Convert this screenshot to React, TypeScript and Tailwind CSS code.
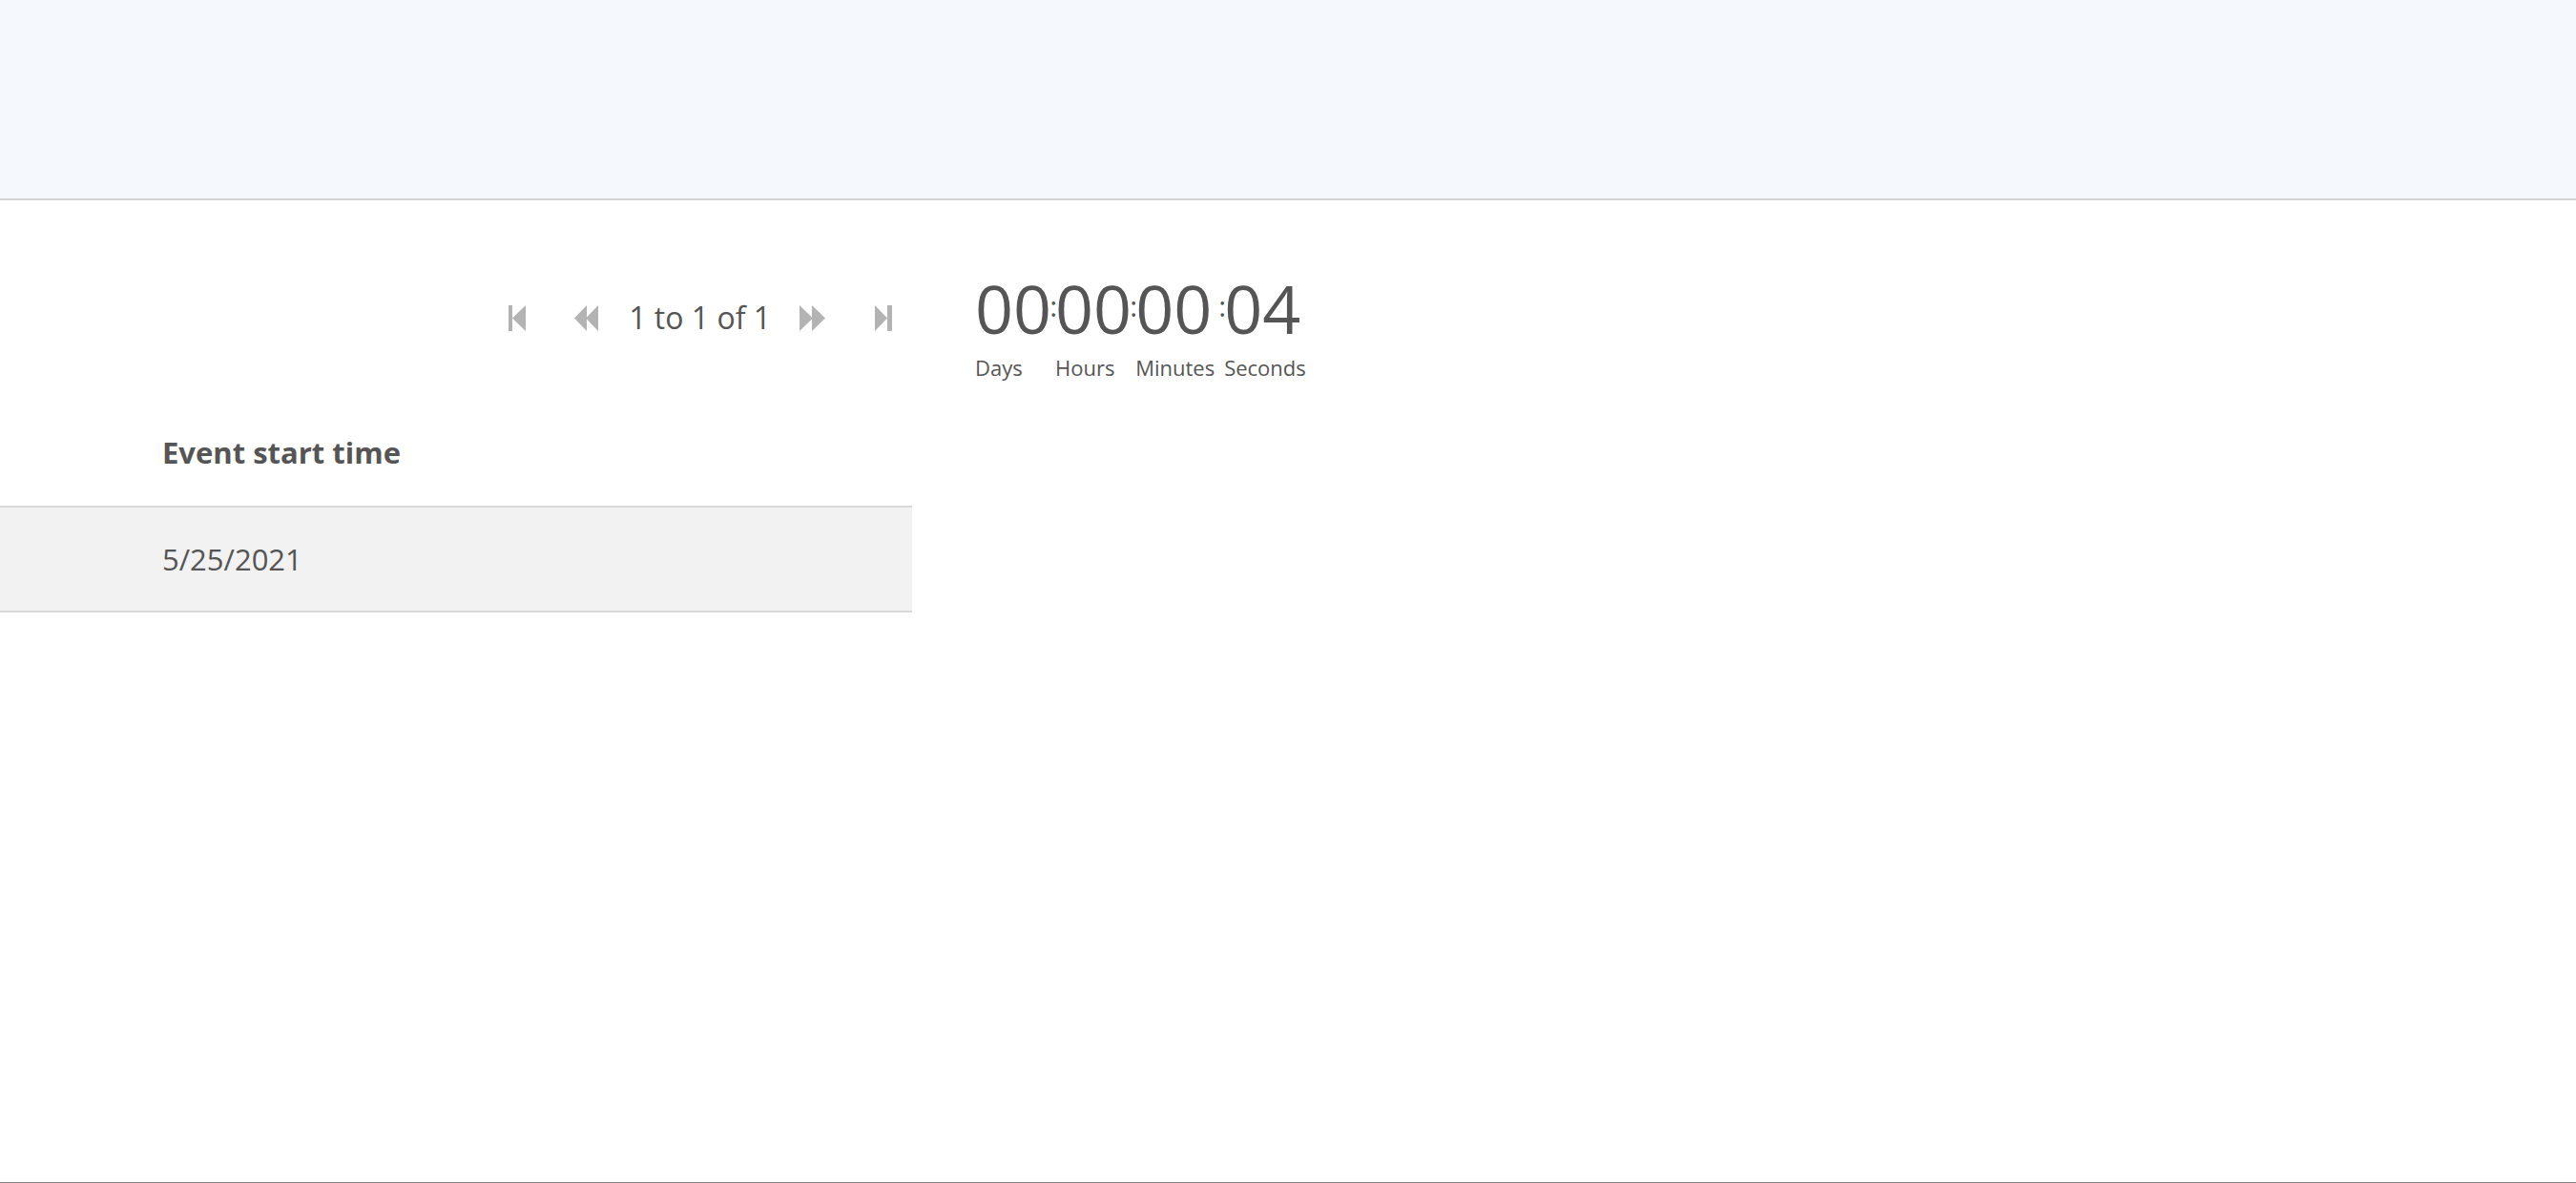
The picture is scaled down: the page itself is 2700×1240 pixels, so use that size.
import React from "react";

const ICON = "#b3b3b3";

function FirstIcon() {
  return (
    <svg width="18" height="27" viewBox="0 0 18 27">
      <rect x="0" y="0" width="4" height="27" fill={ICON} />
      <polygon points="18,0 18,27 4,13.5" fill={ICON} />
    </svg>
  );
}
function PrevIcon() {
  return (
    <svg width="25" height="27" viewBox="0 0 25 27">
      <polygon points="13,0 13,27 0,13.5" fill={ICON} />
      <polygon points="25,0 25,27 12,13.5" fill={ICON} />
    </svg>
  );
}
function NextIcon() {
  return (
    <svg width="27" height="27" viewBox="0 0 27 27">
      <polygon points="0,0 0,27 14,13.5" fill={ICON} />
      <polygon points="13,0 13,27 27,13.5" fill={ICON} />
    </svg>
  );
}
function LastIcon() {
  return (
    <svg width="18" height="27" viewBox="0 0 18 27">
      <polygon points="0,0 0,27 13,13.5" fill={ICON} />
      <rect x="13" y="0" width="5" height="27" fill={ICON} />
    </svg>
  );
}

function Unit({ value, label }: { value: string; label: string }) {
  return (
    <div className="flex flex-col items-start">
      <div className="text-[70px] leading-none">{value}</div>
      <div className="mt-[16px] pr-[6px] text-[22px] leading-none">{label}</div>
    </div>
  );
}

function Colon() {
  return (
    <div className="w-[4px] flex justify-center h-[70px] items-center">
      <span className="text-[30px] leading-none -mt-[4px]">:</span>
    </div>
  );
}

export default function App() {
  return (
    <div
      className="h-[1240px] w-full flex flex-col border-b border-[#808080] bg-white text-[#555555]"
      style={{ fontFamily: "'Open Sans', 'Noto Sans', sans-serif" }}
    >
      <header className="h-[210px] shrink-0 bg-[#f5f8fc] border-b-2 border-[#d3d3d3]" />
      <main className="flex flex-1">
        <div className="w-[956px] shrink-0 flex flex-col">
          <div className="mt-[101px] h-[44px] flex items-center justify-end pr-[21px]">
            <FirstIcon />
            <div className="ml-[51px]">
              <PrevIcon />
            </div>
            <span className="ml-[32px] text-[32px] leading-[44px]">1 to 1 of 1</span>
            <div className="ml-[30px]">
              <NextIcon />
            </div>
            <div className="ml-[52px]">
              <LastIcon />
            </div>
          </div>
          <div className="pt-[98px] pb-[35px] pl-[170px] text-[31px] font-bold leading-[42px]">
            Event start time
          </div>
          <div className="h-[112px] border-y-2 border-[#d9d9d9] bg-[#f2f2f2] flex items-center pl-[170px] text-[31px]">
            5/25/2021
          </div>
        </div>
        <div className="ml-[66px] mt-[78px] flex items-start">
          <Unit value="00" label="Days" />
          <Colon />
          <Unit value="00" label="Hours" />
          <Colon />
          <Unit value="00" label="Minutes" />
          <Colon />
          <Unit value="04" label="Seconds" />
        </div>
      </main>
    </div>
  );
}
